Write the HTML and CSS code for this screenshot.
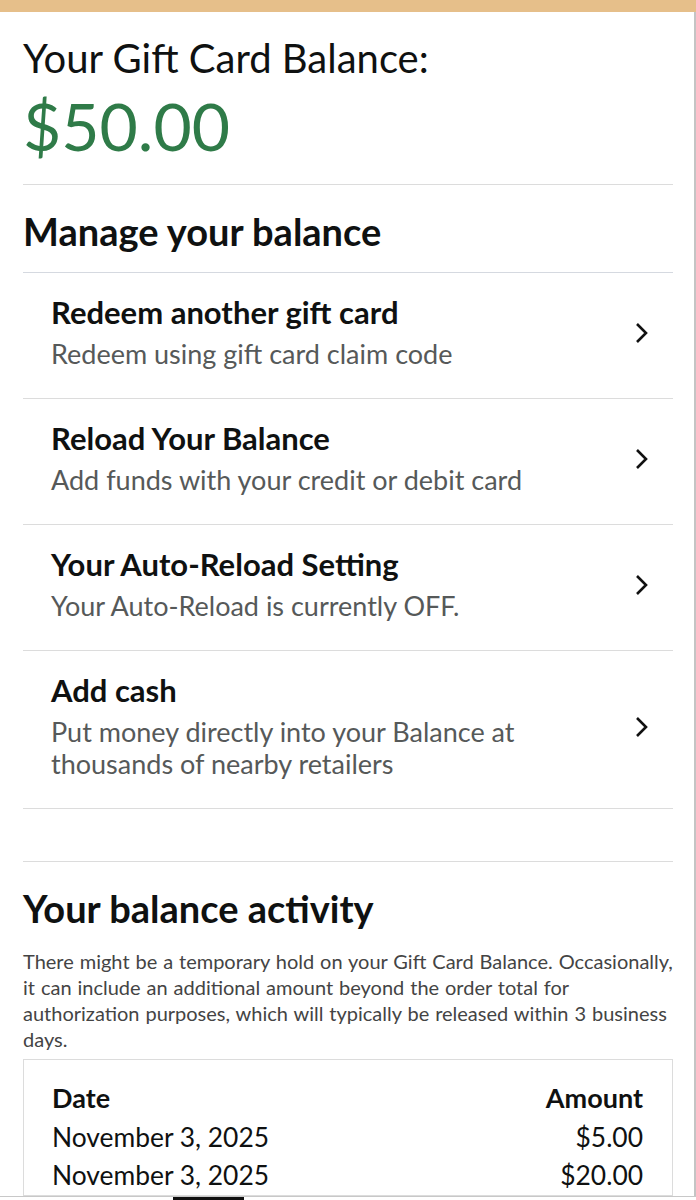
FILE: index.html
```html
<!DOCTYPE html>
<html lang="en">
<head>
    <meta charset="UTF-8">
    <meta name="viewport" content="width=device-width, initial-scale=1.0">
    <title>Your Gift Card Balance</title>
    <link rel="stylesheet" href="styles.css">
</head>
<body>
    <div class="top-bar"></div>
    <main class="page">
        <section class="balance">
            <p class="balance-label">Your Gift Card Balance:</p>
            <p class="balance-amount">$50.00</p>
        </section>

        <section class="manage">
            <h2 class="section-title">Manage your balance</h2>
            <ul class="options">
                <li class="option">
                    <div class="option-text">
                        <span class="option-title">Redeem another gift card</span>
                        <span class="option-sub">Redeem using gift card claim code</span>
                    </div>
                    <svg class="chevron" viewBox="0 0 16 24" width="16" height="24"><path d="M3 3l9 9-9 9" fill="none" stroke="#111" stroke-width="2.6"/></svg>
                </li>
                <li class="option">
                    <div class="option-text">
                        <span class="option-title">Reload Your Balance</span>
                        <span class="option-sub">Add funds with your credit or debit card</span>
                    </div>
                    <svg class="chevron" viewBox="0 0 16 24" width="16" height="24"><path d="M3 3l9 9-9 9" fill="none" stroke="#111" stroke-width="2.6"/></svg>
                </li>
                <li class="option">
                    <div class="option-text">
                        <span class="option-title">Your Auto-Reload Setting</span>
                        <span class="option-sub">Your Auto-Reload is currently OFF.</span>
                    </div>
                    <svg class="chevron" viewBox="0 0 16 24" width="16" height="24"><path d="M3 3l9 9-9 9" fill="none" stroke="#111" stroke-width="2.6"/></svg>
                </li>
                <li class="option">
                    <div class="option-text">
                        <span class="option-title">Add cash</span>
                        <span class="option-sub">Put money directly into your Balance at<br>thousands of nearby retailers</span>
                    </div>
                    <svg class="chevron" viewBox="0 0 16 24" width="16" height="24"><path d="M3 3l9 9-9 9" fill="none" stroke="#111" stroke-width="2.6"/></svg>
                </li>
            </ul>
        </section>

        <section class="activity">
            <h2 class="section-title activity-title">Your balance activity</h2>
            <p class="activity-note">There might be a temporary hold on your Gift Card Balance. Occasionally, it can include an additional amount beyond the order total for authorization purposes, which will typically be released within 3 business days.</p>
            <div class="activity-table">
                <div class="activity-row activity-head">
                    <span>Date</span>
                    <span>Amount</span>
                </div>
                <div class="activity-row">
                    <span>November 3, 2025</span>
                    <span>$5.00</span>
                </div>
                <div class="activity-row">
                    <span>November 3, 2025</span>
                    <span>$20.00</span>
                </div>
            </div>
        </section>
    </main>
    <div class="bottom-bar"><span class="bottom-tab"></span></div>
</body>
</html>
```

FILE: styles.css
```css
body {
    margin: 0;
    font-family: Lato, "Noto Sans", sans-serif;
    color: #0f1111;
    background: #fff;
}

p, h2, ul {
    margin: 0;
    padding: 0;
}

.top-bar {
    height: 12px;
    background: #e6bf8a;
}

.page {
    padding: 0 21px 0 23px;
    border-right: 2px solid #c4c4c4;
    min-height: 1188px;
}

/* balance header */
.balance {
    padding: 23px 0 23px;
    border-bottom: 1px solid #dcdcdc;
}

.balance-label {
    font-size: 40px;
    line-height: 46px;
}

.balance-amount {
    margin-top: 10px;
    font-size: 66px;
    line-height: 70px;
    color: #2f7b48;
}

.section-title {
    font-size: 38px;
    line-height: 40px;
    font-weight: 700;
}

.manage .section-title {
    margin: 26px 0 21px;
}

.options {
    list-style: none;
    border-top: 1px solid #d5d9e0;
}

.option {
    display: flex;
    align-items: center;
    justify-content: space-between;
    padding: 22px 23px 28px 28px;
    border-bottom: 1px solid #dcdcdc;
}

.option-text {
    display: flex;
    flex-direction: column;
    gap: 9px;
}

.option-title {
    font-size: 31px;
    line-height: 34px;
    font-weight: 700;
}

.option-sub {
    font-size: 27px;
    line-height: 32px;
    color: #565959;
}

.chevron {
    flex: none;
}

/* activity */
.activity {
    margin-top: 52px;
    border-top: 1px solid #dcdcdc;
}

.activity-title {
    margin: 25px 0 19px;
    line-height: 42px;
}

.activity-note {
    font-size: 20px;
    line-height: 26px;
    word-spacing: 0.8px;
    color: #444;
}

.activity-table {
    margin-top: 7px;
    border: 1px solid #dcdcdc;
    padding: 19px 29px 0 28px;
}

.activity-row {
    display: flex;
    justify-content: space-between;
    font-size: 26.4px;
    line-height: 38.5px;
}

.activity-head {
    font-size: 27px;
    font-weight: 700;
}

.bottom-bar {
    position: fixed;
    left: 0;
    right: 0;
    bottom: 0;
    height: 3px;
    border-top: 1px solid #c8c8c8;
    background: #fff;
}

.bottom-tab {
    position: absolute;
    left: 173px;
    top: 0;
    width: 71px;
    height: 3px;
    background: #111;
}
```
